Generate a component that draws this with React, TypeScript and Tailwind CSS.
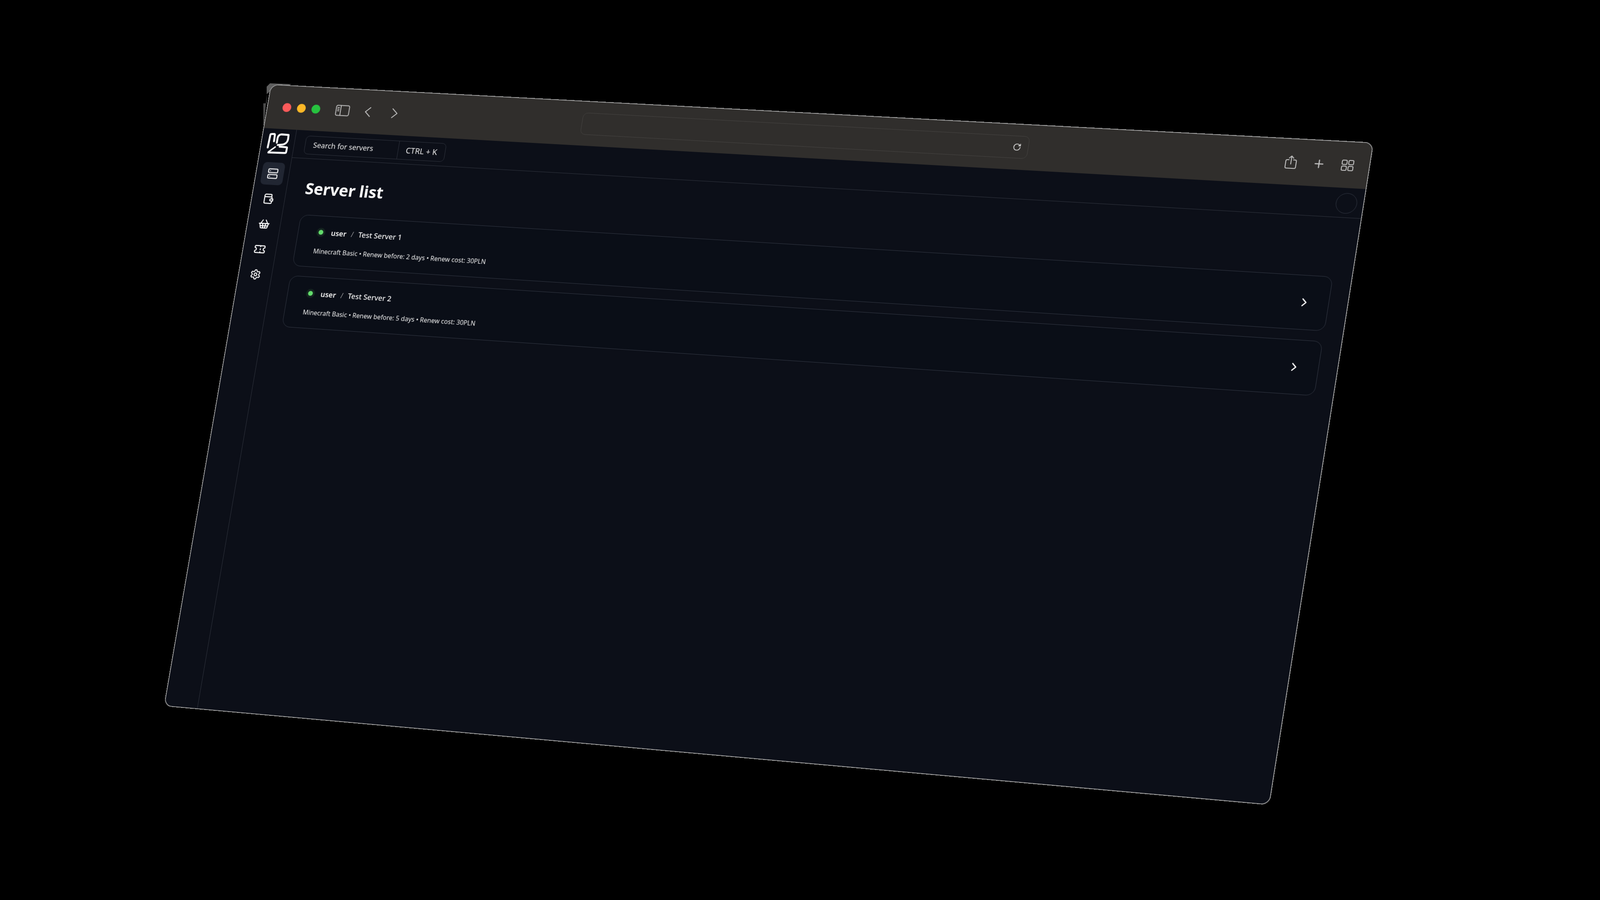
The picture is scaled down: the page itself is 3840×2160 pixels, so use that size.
import React from "react";
import { ChevronRight, RotateCw, Server, ShoppingBasket, Ticket, Settings, Plus } from "lucide-react";

const W = 2660;
const H = 1550;

function quadMatrix() {
  const [x0, y0] = [650, 202];
  const [x1, y1] = [3298, 342];
  const [x2, y2] = [3048, 1933];
  const [x3, y3] = [393, 1695];
  const dx1 = x1 - x2, dx2 = x3 - x2, sx = x0 - x1 + x2 - x3;
  const dy1 = y1 - y2, dy2 = y3 - y2, sy = y0 - y1 + y2 - y3;
  const den = dx1 * dy2 - dx2 * dy1;
  const g = (sx * dy2 - dx2 * sy) / den;
  const h = (dx1 * sy - sx * dy1) / den;
  const a = x1 - x0 + g * x1, b = x3 - x0 + h * x3;
  const d = y1 - y0 + g * y1, e = y3 - y0 + h * y3;
  return `matrix3d(${a / W},${d / W},0,${g / W},${b / H},${e / H},0,${h / H},0,0,1,0,${x0},${y0},0,1)`;
}

function Logo() {
  return (
    <svg viewBox="-2 -2 50 50" className="h-[54px] w-[54px]" fill="none" stroke="#ffffff" strokeWidth="4.400" strokeLinecap="round" strokeLinejoin="round">
      <path d="M0.500 33 L1.700 4 Q1.800 1.500 4 1.500 L10 1.200 Q12.300 1 12.300 3.500 L12.800 18" />
      <path d="M20 21 L20 10 Q20.500 1.500 29 1.200 L44.500 1.500 L45 11 Q44.800 22 34 24.500 L23 26" />
      <path d="M28 29.500 L44 30 Q46 30 46 32 L45.600 41 Q45.500 43.500 43 43.500 L4 44.500" />
      <path d="M4 43 L18 31" strokeWidth="3.400" />
    </svg>
  );
}

function WalletIcon() {
  return (
    <svg viewBox="0 0 24 24" className="h-[30px] w-[30px]" fill="none" stroke="#ffffff" strokeWidth="2" strokeLinecap="round" strokeLinejoin="round">
      <path d="M18 8V4.500A1.500 1.500 0 0 0 16.500 3H6.500A2.500 2.500 0 0 0 4 5.500V19a2 2 0 0 0 2 2h11a2 2 0 0 0 2-2v-3" />
      <path d="M4 6.500C4 7.500 5 8 6.500 8H17a2 2 0 0 1 2 2v2" />
      <path d="M21 12v4h-4a2 2 0 0 1 0-4h4Z" />
    </svg>
  );
}

function SidebarToggle() {
  return (
    <svg viewBox="0 0 36 28" className="h-7 w-9" fill="none" stroke="#c4c4c4" strokeWidth="2" strokeLinecap="round" strokeLinejoin="round">
      <rect x="1.500" y="1.500" width="33" height="25" rx="3.500" />
      <path d="M13 2v24" />
      <path d="M5 7h4M5 11h4M5 15h4" />
    </svg>
  );
}

function ChevronThin({ flip }: { flip?: boolean }) {
  return (
    <svg viewBox="0 0 16 26" className="h-[26px] w-4" fill="none" stroke="#c4c4c4" strokeWidth="2.200" strokeLinecap="round" strokeLinejoin="round">
      {flip ? <path d="M2 2 L14 13 L2 24" /> : <path d="M14 2 L2 13 L14 24" />}
    </svg>
  );
}

function ShareIcon() {
  return (
    <svg viewBox="0 0 28 34" className="h-[34px] w-7" fill="none" stroke="#c4c4c4" strokeWidth="2" strokeLinecap="round" strokeLinejoin="round">
      <path d="M9 11H5a3 3 0 0 0-3 3v14a3 3 0 0 0 3 3h18a3 3 0 0 0 3-3V14a3 3 0 0 0-3-3h-4" />
      <path d="M14 21V2M9 7l5-5 5 5" />
    </svg>
  );
}

function TabsIcon() {
  return (
    <svg viewBox="0 0 30 28" className="h-7 w-[30px]" fill="none" stroke="#c4c4c4" strokeWidth="2">
      <rect x="2" y="2" width="11" height="10" rx="2.500" />
      <rect x="17" y="2" width="11" height="10" rx="2.500" />
      <rect x="2" y="16" width="11" height="10" rx="2.500" />
      <rect x="17" y="16" width="11" height="10" rx="2.500" />
    </svg>
  );
}

function Card({ name, days }: { name: string; days: number }) {
  return (
    <div className="flex h-32 items-center justify-between rounded-[20px] border border-[#323743] bg-[#0a0e17] pl-[42px] pr-[39px]">
      <div className="flex flex-col gap-[22px]">
        <div className="flex items-center">
          <span className="ml-[9px] h-3 w-3 rounded-full bg-[#63dc6c] shadow-[0_0_0_5px_#14241f]" />
          <span className="ml-[20px] text-[18px] font-semibold text-[#f4f4f4]">user</span>
          <span className="mx-[12px] text-[18px] font-light text-[#d0d0d0]">/</span>
          <span className="text-[18px] font-medium text-[#f4f4f4]">{name}</span>
        </div>
        <div className="ml-[4px] text-[15.6px] font-normal text-[#ececec]">
          Minecraft Basic • Renew before: {days} days • Renew cost: 30PLN
        </div>
      </div>
      <ChevronRight className="h-8 w-8 text-white" strokeWidth={2} />
    </div>
  );
}

export default function App() {
  return (
    <div className="relative h-[2160px] w-[3840px] overflow-hidden bg-black font-['Noto_Sans',sans-serif]">
      <svg className="absolute left-0 top-0" width="3840" height="2160">
        <polygon points="648,200 700,202 652,216 640,226 640,208" fill="#5e5e5e" />
        <polygon points="632,248 640,248 640,226 634,300 632,300" fill="#4a4a4a" />
      </svg>
      <div
        className="absolute left-0 top-0 flex h-[1550px] w-[2660px] origin-top-left flex-col overflow-hidden rounded-[20px] border-2 border-[#9a9a9a] bg-[#0c0f18]"
        style={{ transform: quadMatrix() }}
      >
        <div className="flex h-[108px] shrink-0 items-center bg-[#302e2c] pl-[38px] pr-[34px]">
          <div className="flex items-center gap-[15px]">
            <span className="h-[22px] w-[22px] rounded-full bg-[#fb5a5a]" />
            <span className="h-[22px] w-[22px] rounded-full bg-[#fdb827]" />
            <span className="h-[22px] w-[22px] rounded-full bg-[#27c23f]" />
          </div>
          <div className="ml-[39px]"><SidebarToggle /></div>
          <div className="ml-[38px]"><ChevronThin /></div>
          <div className="ml-[52px]"><ChevronThin flip /></div>
          <div className="ml-[460px] flex h-[54px] w-[1078px] items-center justify-end rounded-[12px] border border-[#454341] pr-[16px]">
            <RotateCw className="h-5 w-5 text-[#e8e8e8]" strokeWidth={2} />
          </div>
          <div className="ml-auto flex items-center gap-[35px] pt-[2px]">
            <ShareIcon />
            <Plus className="h-[30px] w-[30px] text-[#c4c4c4]" strokeWidth={2} />
            <TabsIcon />
          </div>
        </div>
        <div className="flex min-h-0 flex-1">
          <aside className="flex w-[84px] shrink-0 flex-col items-center border-r border-[#30343e] pt-[10px]">
            <Logo />
            <div className="mt-[20px] flex flex-col items-center gap-[7px]">
              <div className="flex h-14 w-14 items-center justify-center rounded-[10px] bg-[#212632]">
                <Server className="h-7 w-7 text-white" strokeWidth={2} />
              </div>
              <div className="flex h-14 w-14 items-center justify-center"><WalletIcon /></div>
              <div className="flex h-14 w-14 items-center justify-center"><ShoppingBasket className="h-[30px] w-[30px] text-white" strokeWidth={2} /></div>
              <div className="flex h-14 w-14 items-center justify-center"><Ticket className="h-[30px] w-[30px] text-white" strokeWidth={2} /></div>
              <div className="flex h-14 w-14 items-center justify-center"><Settings className="h-7 w-7 text-white" strokeWidth={2} /></div>
            </div>
          </aside>
          <main className="flex min-w-0 flex-1 flex-col">
            <header className="flex h-[70px] shrink-0 items-center justify-between border-b border-[#30343e] pl-[27px] pr-[14px] pt-[2px]">
              <div className="flex h-[46px] w-[355px] items-stretch rounded-[10px] border border-[#30343e] text-[18px] text-[#ededed]">
                <div className="flex w-[236px] items-center border-r border-[#30343e] pl-[20px]">Search for servers</div>
                <div className="flex flex-1 items-center justify-center text-[19.5px]">CTRL + K</div>
              </div>
              <div className="h-[48px] w-[48px] rounded-full border border-[#323743]" />
            </header>
            <div className="flex flex-col pl-[47px] pr-[42px] pt-[43px]">
              <h1 className="text-[39.5px] font-bold leading-[60px] text-white">Server list</h1>
              <div className="mt-[36px] flex flex-col gap-6">
                <Card name="Test Server 1" days={2} />
                <Card name="Test Server 2" days={5} />
              </div>
            </div>
          </main>
        </div>
      </div>
    </div>
  );
}
